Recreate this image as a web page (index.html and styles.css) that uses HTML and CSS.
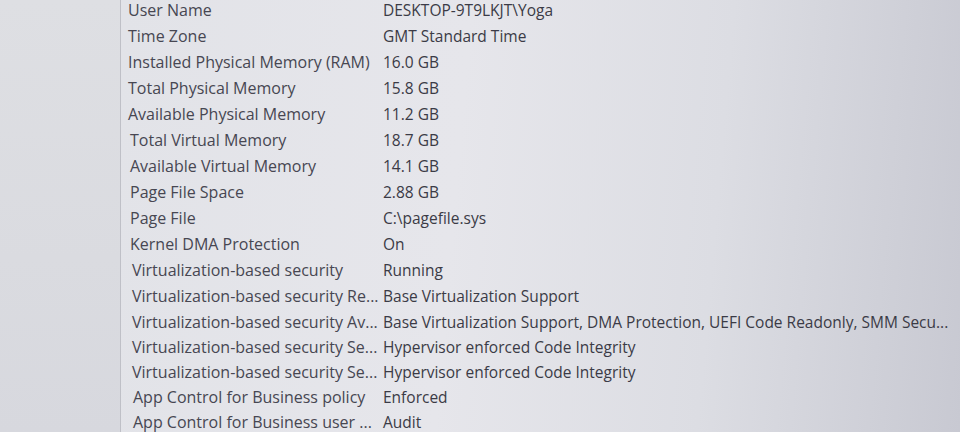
FILE: index.html
```html
<!DOCTYPE html>
<html lang="en">
  <head>
    <meta charset="UTF-8" />
    <title>System Information</title>
    <link rel="stylesheet" href="styles.css">
  </head>
  <body>
    <div class="window">
      <div class="tree-pane"></div>
      <div class="details">
        <div class="row"><span class="item">User Name</span><span class="value">DESKTOP-9T9LKJT\Yoga</span></div>
        <div class="row"><span class="item">Time Zone</span><span class="value">GMT Standard Time</span></div>
        <div class="row"><span class="item">Installed Physical Memory (RAM)</span><span class="value">16.0 GB</span></div>
        <div class="row"><span class="item">Total Physical Memory</span><span class="value">15.8 GB</span></div>
        <div class="row"><span class="item">Available Physical Memory</span><span class="value">11.2 GB</span></div>
        <div class="row"><span class="item">Total Virtual Memory</span><span class="value">18.7 GB</span></div>
        <div class="row"><span class="item">Available Virtual Memory</span><span class="value">14.1 GB</span></div>
        <div class="row"><span class="item">Page File Space</span><span class="value">2.88 GB</span></div>
        <div class="row"><span class="item">Page File</span><span class="value">C:\pagefile.sys</span></div>
        <div class="row"><span class="item">Kernel DMA Protection</span><span class="value">On</span></div>
        <div class="row"><span class="item">Virtualization-based security</span><span class="value">Running</span></div>
        <div class="row"><span class="item">Virtualization-based security Re...</span><span class="value">Base Virtualization Support</span></div>
        <div class="row"><span class="item">Virtualization-based security Av...</span><span class="value">Base Virtualization Support, DMA Protection, UEFI Code Readonly, SMM Secu...</span></div>
        <div class="row"><span class="item">Virtualization-based security Se...</span><span class="value">Hypervisor enforced Code Integrity</span></div>
        <div class="row"><span class="item">Virtualization-based security Se...</span><span class="value">Hypervisor enforced Code Integrity</span></div>
        <div class="row"><span class="item">App Control for Business policy</span><span class="value">Enforced</span></div>
        <div class="row"><span class="item">App Control for Business user ...</span><span class="value">Audit</span></div>
      </div>
    </div>
  </body>
</html>
```

FILE: styles.css
```css
body {
  margin: 0;
  height: 432px;
  overflow: hidden;
  font-family: "Open Sans", "Noto Sans", sans-serif;
  background: #dcdde2;
}

.window {
  display: flex;
  height: 100%;
}

.tree-pane {
  width: 120px;
  flex-shrink: 0;
  background: linear-gradient(180deg, #dedfe3 0%, #dadbe0 60%, #d7d8de 100%);
  border-right: 1px solid #bfc0c7;
  box-shadow: 1px 0 0 #e9e9ed;
}

.details {
  flex: 1;
  margin-top: -3px;
  padding-left: 2px;
  background: linear-gradient(95deg, #e2e3e8 0%, #e6e6eb 40%, #dcdde3 70%, #c8c9d2 100%);
}

.row {
  display: grid;
  grid-template-columns: 260px 1fr;
  height: 26px;
  align-items: center;
  white-space: nowrap;
}

.row:nth-child(n+13) {
  height: 25px;
}

.item {
  padding-left: 5px;
  font-size: 16px;
  color: #474752;
}

/* the photo leans a little: lower labels sit further right */
.row:nth-child(n+6) .item {
  padding-left: 7px;
}

.row:nth-child(n+11) .item {
  padding-left: 9px;
}

.row:nth-child(n+16) .item {
  padding-left: 10px;
}

.value {
  font-size: 15.5px;
  color: #3b3b46;
}
```
